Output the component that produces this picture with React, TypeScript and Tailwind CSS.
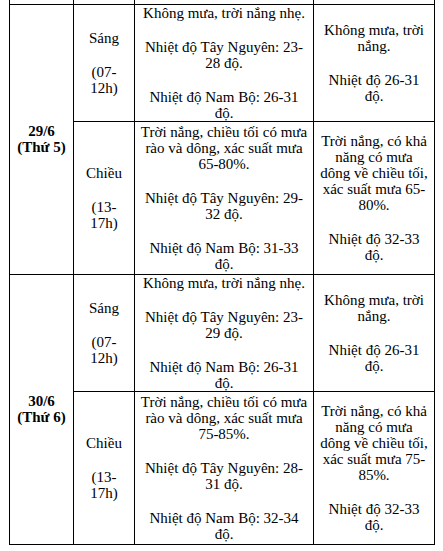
import React from "react";

const cell = "border border-black align-middle text-center p-0";

function Para({ lines, last }: { lines: string[]; last?: boolean }) {
  return (
    <div className={last ? "" : "mb-[18px]"}>
      {lines.map((l, i) => (
        <div key={i} className="whitespace-nowrap">
          {l}
        </div>
      ))}
    </div>
  );
}

function Block({ paras }: { paras: string[][] }) {
  return (
    <div>
      {paras.map((p, i) => (
        <Para key={i} lines={p} last={i === paras.length - 1} />
      ))}
    </div>
  );
}

type Row = {
  period: string[][];
  main: string[][];
  side: string[][];
  h: string;
};

const days: { label: string[]; rows: Row[] }[] = [
  {
    label: ["29/6", "(Thứ 5)"],
    rows: [
      {
        h: "h-[117px]",
        period: [["Sáng"], ["(07-", "12h)"]],
        main: [
          ["Không mưa, trời nắng nhẹ."],
          ["Nhiệt độ Tây Nguyên: 23-", "28 độ."],
          ["Nhiệt độ Nam Bộ: 26-31", "độ."],
        ],
        side: [["Không mưa, trời", "nắng."], ["Nhiệt độ 26-31", "độ."]],
      },
      {
        h: "h-[153px]",
        period: [["Chiều"], ["(13-", "17h)"]],
        main: [
          ["Trời nắng, chiều tối có mưa", "rào và dông, xác suất mưa", "65-80%."],
          ["Nhiệt độ Tây Nguyên: 29-", "32 độ."],
          ["Nhiệt độ Nam Bộ: 31-33", "độ."],
        ],
        side: [
          ["Trời nắng, có khả", "năng có mưa", "dông về chiều tối,", "xác suất mưa 65-", "80%."],
          ["Nhiệt độ 32-33", "độ."],
        ],
      },
    ],
  },
  {
    label: ["30/6", "(Thứ 6)"],
    rows: [
      {
        h: "h-[117px]",
        period: [["Sáng"], ["(07-", "12h)"]],
        main: [
          ["Không mưa, trời nắng nhẹ."],
          ["Nhiệt độ Tây Nguyên: 23-", "29 độ."],
          ["Nhiệt độ Nam Bộ: 26-31", "độ."],
        ],
        side: [["Không mưa, trời", "nắng."], ["Nhiệt độ 26-31", "độ."]],
      },
      {
        h: "h-[153px]",
        period: [["Chiều"], ["(13-", "17h)"]],
        main: [
          ["Trời nắng, chiều tối có mưa", "rào và dông, xác suất mưa", "75-85%."],
          ["Nhiệt độ Tây Nguyên: 28-", "31 độ."],
          ["Nhiệt độ Nam Bộ: 32-34", "độ."],
        ],
        side: [
          ["Trời nắng, có khả", "năng có mưa", "dông về chiều tối,", "xác suất mưa 75-", "85%."],
          ["Nhiệt độ 32-33", "độ."],
        ],
      },
    ],
  },
];

export default function App() {
  return (
    <div
      className="w-[443px] h-[551px] bg-white text-black overflow-hidden pl-[9px]"
      style={{ fontFamily: '"Liberation Serif", "Times New Roman", serif' }}
    >
      <table className="border-collapse table-fixed w-[426px] text-[15px] leading-[16px] text-black">
        <colgroup>
          <col className="w-[64px]" />
          <col className="w-[61px]" />
          <col className="w-[179px]" />
          <col className="w-[121px]" />
        </colgroup>
        <tbody>
          <tr className="h-[4px]">
            <td className="border-x border-black p-0 h-[4px]"></td>
            <td className="border-x border-black p-0 h-[4px]"></td>
            <td className="border-x border-black p-0 h-[4px]"></td>
            <td className="border-x border-black p-0 h-[4px]"></td>
          </tr>
          {days.map((d) =>
            d.rows.map((r, i) => (
              <tr key={d.label[0] + i} className={r.h}>
                {i === 0 && (
                  <td rowSpan={2} className={cell + " font-bold"}>
                    {d.label.map((l) => (
                      <div key={l} className="whitespace-nowrap">
                        {l}
                      </div>
                    ))}
                  </td>
                )}
                <td className={cell}>
                  <Block paras={r.period} />
                </td>
                <td className={cell}>
                  <Block paras={r.main} />
                </td>
                <td className={cell}>
                  <Block paras={r.side} />
                </td>
              </tr>
            ))
          )}
        </tbody>
      </table>
    </div>
  );
}
